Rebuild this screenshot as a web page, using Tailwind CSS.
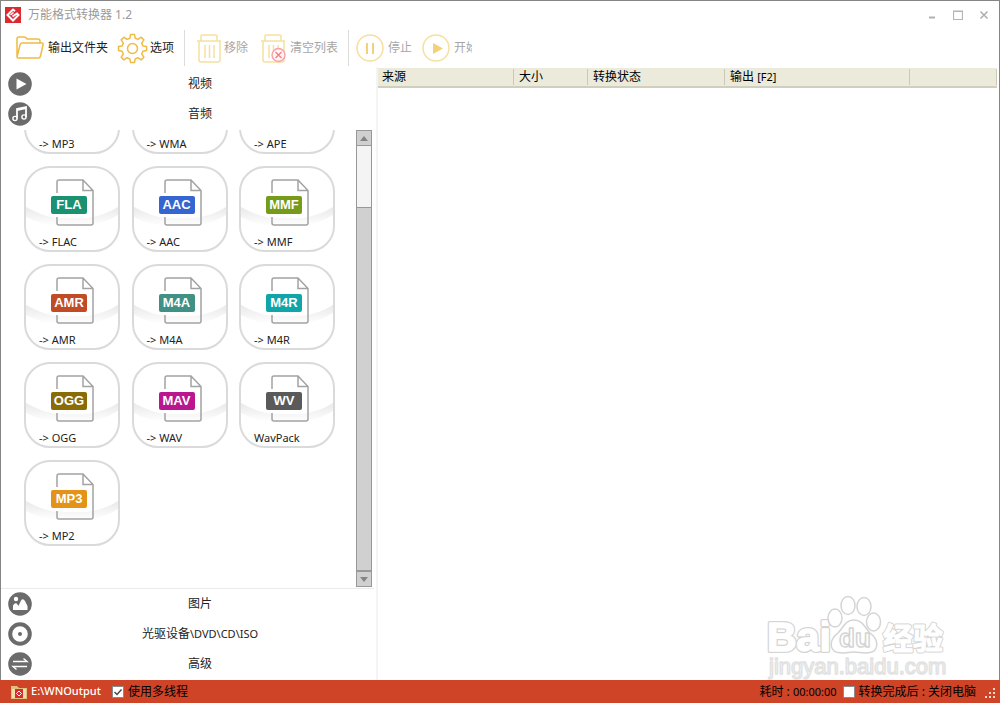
<!DOCTYPE html>
<html lang="zh-CN">
<head>
<meta charset="utf-8">
<title>万能格式转换器 1.2</title>
<script src="https://cdn.jsdelivr.net/npm/@tailwindcss/browser@4"></script>
</head>
<body class="flex h-screen flex-col overflow-hidden bg-white font-['Noto_Sans','Noto_Sans_CJK_SC',sans-serif] text-xs text-[#222]">
<svg class="absolute size-0">
  <symbol id="doc" viewBox="0 0 96 86">
    <path d="M2 41Q20 51 34 52H62Q80 50 94 41V49Q80 58 62 60H34Q14 58 2 51Z" fill="url(#shine)"/>
    <path d="M32 28V50H64V28Z" fill="#fff"/>
    <path d="M33 27V16q0-2 2-2H59L69 24.500V57q0 2-2 2H35q-2 0-2-2V51M59 14V24.500H69" fill="none" stroke="#a3a3a3" stroke-width="1.500"/>
  </symbol>
  <symbol id="trash" viewBox="0 0 26 29">
    <path d="M1 7H25M5 7V2q0-1 1-1H20q1 0 1 1V7M3 7V26q0 2 2 2H22q2 0 2-2V7M9 11V24M13.500 11V24M18 11V24" fill="none" stroke="#f6dfa0" stroke-width="1.500"/>
  </symbol>
  <linearGradient id="shine" x1="0" y1="0" x2="0" y2="1"><stop offset="0" stop-color="#e9e9e9"/><stop offset="1" stop-color="#fff"/></linearGradient>
</svg>

<div class="flex min-h-0 flex-1 flex-col border-x border-t border-[#858585]">
  <header class="flex h-7 shrink-0 items-center pl-1 pr-[10px] text-[#9a9a9a]">
    <svg class="mr-[7px] size-4" viewBox="0 0 16 16"><path d="M0 0H16V16H0Z" fill="#dc2a31"/><path d="M10 4.200 8 2.500 2.500 8 8 13.500 13.500 8 12 6.500 7.500 9.500" fill="none" stroke="#fff" stroke-width="2"/><path d="M5.500 8 8.500 5.500" stroke="#fff" stroke-width="1.500"/></svg>
    <h1 class="flex-1">万能格式转换器 1.2</h1>
    <div class="flex items-center gap-4">
      <button aria-label="最小化"><svg class="size-[10px]" viewBox="0 0 10 10"><path d="M2 7.500H8" stroke="#b0b0b0" stroke-width="2"/></svg></button>
      <button aria-label="最大化"><svg class="size-[10px]" viewBox="0 0 10 10"><path d="M.5 1H9.500V9.500H.5ZM0 1.500H10" fill="none" stroke="#b5b5b5" stroke-width="1.200"/></svg></button>
      <button aria-label="关闭"><svg class="size-[10px]" viewBox="0 0 10 10"><path d="M1.500 1.500 8.500 8.500M8.500 1.500 1.500 8.500" stroke="#b0b0b0" stroke-width="1.600"/></svg></button>
    </div>
  </header>

  <nav class="flex h-[38px] shrink-0 items-center pl-[15px]">
    <button class="mr-[9px] flex items-center gap-1">
      <svg class="h-6 w-7" viewBox="0 0 28 24"><path d="M1 21V3q0-2 2-2H8q2 0 3 2H22q2 0 2 2V7M1 21 4 9q.5-2 2-2H26q1.500 0 1 2L24.500 20q-.5 2-2 2H2q-1 0-1-1Z" fill="none" stroke="#eebc44" stroke-width="1.500"/></svg>
      <span>输出文件夹</span>
    </button>
    <button class="mr-[10px] flex items-center gap-[2px]">
      <svg class="size-[31px]" viewBox="0 0 31 31"><g fill="none" stroke="#eebc44" stroke-width="1.500"><path d="M13.500 1.500h4l.7 3.700 2.800 1.200 3.200-2.200 2.700 2.700-2.200 3.200 1.200 2.900 3.700.6v3.900l-3.700.7-1.200 2.800 2.200 3.200-2.700 2.700-3.200-2.200-2.800 1.200-.7 3.600h-4l-.6-3.600-2.900-1.200-3.100 2.200L4.200 24.200 6.300 21 5.100 18.200l-3.600-.7v-3.900l3.600-.6 1.200-2.900L4.200 6.900 6.900 4.200 10 6.400l2.900-1.200Z" stroke-linejoin="round"/><circle cx="15.500" cy="15.500" r="5"/></g></svg>
      <span>选项</span>
    </button>
    <span class="mr-[11px] h-9 w-px bg-[#ddd]"></span>
    <button class="mr-3 flex items-center gap-[2px] text-[#a6a6a6]">
      <svg class="h-[29px] w-[26px]"><use href="#trash"/></svg>
      <span>移除</span>
    </button>
    <button class="mr-[10px] flex items-center gap-1 text-[#a6a6a6]">
      <svg class="h-[29px] w-[26px]"><use href="#trash"/><circle cx="18.500" cy="21" r="6.500" fill="#fff3f3" stroke="#f7a0a5" stroke-width="1.400"/><path d="M15.500 18 21.500 24M21.500 18 15.500 24" stroke="#f27c84" stroke-width="1.200"/></svg>
      <span>清空列表</span>
    </button>
    <span class="mr-[7px] h-9 w-px bg-[#ddd]"></span>
    <button class="mr-[10px] flex items-center gap-1 text-[#a6a6a6]">
      <svg class="size-7" viewBox="0 0 28 28"><circle cx="14" cy="14" r="13" fill="none" stroke="#f6dfa0" stroke-width="1.500"/><path d="M11 9V20M17 9V20" stroke="#f3d07a" stroke-width="2"/></svg>
      <span>停止</span>
    </button>
    <button class="flex items-center gap-1 text-[#a6a6a6]">
      <svg class="size-7" viewBox="0 0 28 28"><circle cx="14" cy="14" r="13" fill="none" stroke="#f6dfa0" stroke-width="1.500"/><path d="M11 9 21 14.500 11 20Z" fill="#f3d07a"/></svg>
      <span class="w-[18px] overflow-hidden whitespace-nowrap">开始</span>
    </button>
  </nav>

  <main class="flex min-h-0 flex-1">
    <aside class="flex w-[377px] shrink-0 flex-col border-r-2 border-[#f4f4f4] pb-px pt-[2px]">
      <button class="flex h-[30px] shrink-0 items-center pl-[7px] pr-2">
        <svg class="size-6" viewBox="0 0 24 24"><circle cx="12" cy="12" r="11.800" fill="#6b6b6b"/><path d="M8.500 6.500 18.500 12 8.500 17.500Z" fill="#fff"/></svg>
        <span class="flex-1">视频</span>
      </button>
      <button class="flex h-[30px] shrink-0 items-center pl-[7px] pr-2">
        <svg class="size-6" viewBox="0 0 24 24"><circle cx="12" cy="12" r="11.800" fill="#6b6b6b"/><path d="M9 16.500V7L18 5V15M9 8.200 18 6.200" fill="none" stroke="#fff" stroke-width="1.800"/><circle cx="7" cy="16.500" r="2.100" fill="none" stroke="#fff" stroke-width="1.400"/><circle cx="16" cy="15" r="2.100" fill="none" stroke="#fff" stroke-width="1.400"/></svg>
        <span class="flex-1">音频</span>
      </button>
      <section class="mr-[2px] mt-px flex min-h-0 flex-1 overflow-hidden border-b border-[#ebebeb] pb-px pl-[23px]">
        <div class="-mt-[62px] grid w-[311px] grid-cols-[96px_96px_96px] content-start justify-between gap-y-3 text-[11px] leading-4">
          <button class="flex h-[86px] items-end rounded-[26px] border-2 border-[#dadada] px-[13px]">-&gt; MP3</button>
          <button class="flex h-[86px] items-end rounded-[26px] border-2 border-[#dadada] px-[13px]">-&gt; WMA</button>
          <button class="flex h-[86px] items-end rounded-[26px] border-2 border-[#dadada] px-[13px]">-&gt; APE</button>

          <button class="relative flex h-[86px] items-end rounded-[26px] border-2 border-[#dadada] px-[13px]"><svg class="absolute -inset-[2px] h-[86px] w-24"><use href="#doc"/></svg><b class="absolute left-[25px] top-7 h-[18px] w-9 rounded-[2px] bg-[#1a9271] text-center font-['Liberation_Sans',sans-serif] text-[13px] leading-[18px] text-white">FLA</b><span class="relative">-&gt; FLAC</span></button>
          <button class="relative flex h-[86px] items-end rounded-[26px] border-2 border-[#dadada] px-[13px]"><svg class="absolute -inset-[2px] h-[86px] w-24"><use href="#doc"/></svg><b class="absolute left-[25px] top-7 h-[18px] w-9 rounded-[2px] bg-[#3565d0] text-center font-['Liberation_Sans',sans-serif] text-[13px] leading-[18px] text-white">AAC</b><span class="relative">-&gt; AAC</span></button>
          <button class="relative flex h-[86px] items-end rounded-[26px] border-2 border-[#dadada] px-[13px]"><svg class="absolute -inset-[2px] h-[86px] w-24"><use href="#doc"/></svg><b class="absolute left-[25px] top-7 h-[18px] w-9 rounded-[2px] bg-[#759b19] text-center font-['Liberation_Sans',sans-serif] text-[13px] leading-[18px] text-white">MMF</b><span class="relative">-&gt; MMF</span></button>

          <button class="relative flex h-[86px] items-end rounded-[26px] border-2 border-[#dadada] px-[13px]"><svg class="absolute -inset-[2px] h-[86px] w-24"><use href="#doc"/></svg><b class="absolute left-[25px] top-7 h-[18px] w-9 rounded-[2px] bg-[#c04b24] text-center font-['Liberation_Sans',sans-serif] text-[13px] leading-[18px] text-white">AMR</b><span class="relative">-&gt; AMR</span></button>
          <button class="relative flex h-[86px] items-end rounded-[26px] border-2 border-[#dadada] px-[13px]"><svg class="absolute -inset-[2px] h-[86px] w-24"><use href="#doc"/></svg><b class="absolute left-[25px] top-7 h-[18px] w-9 rounded-[2px] bg-[#3f9186] text-center font-['Liberation_Sans',sans-serif] text-[13px] leading-[18px] text-white">M4A</b><span class="relative">-&gt; M4A</span></button>
          <button class="relative flex h-[86px] items-end rounded-[26px] border-2 border-[#dadada] px-[13px]"><svg class="absolute -inset-[2px] h-[86px] w-24"><use href="#doc"/></svg><b class="absolute left-[25px] top-7 h-[18px] w-9 rounded-[2px] bg-[#10a5a8] text-center font-['Liberation_Sans',sans-serif] text-[13px] leading-[18px] text-white">M4R</b><span class="relative">-&gt; M4R</span></button>

          <button class="relative flex h-[86px] items-end rounded-[26px] border-2 border-[#dadada] px-[13px]"><svg class="absolute -inset-[2px] h-[86px] w-24"><use href="#doc"/></svg><b class="absolute left-[25px] top-7 h-[18px] w-9 rounded-[2px] bg-[#8a6b06] text-center font-['Liberation_Sans',sans-serif] text-[13px] leading-[18px] text-white">OGG</b><span class="relative">-&gt; OGG</span></button>
          <button class="relative flex h-[86px] items-end rounded-[26px] border-2 border-[#dadada] px-[13px]"><svg class="absolute -inset-[2px] h-[86px] w-24"><use href="#doc"/></svg><b class="absolute left-[25px] top-7 h-[18px] w-9 rounded-[2px] bg-[#b9168f] text-center font-['Liberation_Sans',sans-serif] text-[13px] leading-[18px] text-white">MAV</b><span class="relative">-&gt; WAV</span></button>
          <button class="relative flex h-[86px] items-end rounded-[26px] border-2 border-[#dadada] px-[13px]"><svg class="absolute -inset-[2px] h-[86px] w-24"><use href="#doc"/></svg><b class="absolute left-[25px] top-7 h-[18px] w-9 rounded-[2px] bg-[#5a5a5a] text-center font-['Liberation_Sans',sans-serif] text-[13px] leading-[18px] text-white">WV</b><span class="relative">WavPack</span></button>

          <button class="relative flex h-[86px] items-end rounded-[26px] border-2 border-[#dadada] px-[13px]"><svg class="absolute -inset-[2px] h-[86px] w-24"><use href="#doc"/></svg><b class="absolute left-[25px] top-7 h-[18px] w-9 rounded-[2px] bg-[#e39317] text-center font-['Liberation_Sans',sans-serif] text-[13px] leading-[18px] text-white">MP3</b><span class="relative">-&gt; MP2</span></button>
        </div>
        <div class="ml-auto mr-[2px] flex w-4 flex-col border border-[#989898] bg-[#d0d0d0]">
          <button class="flex h-[15px] items-center justify-center border-b border-[#989898]" aria-label="向上滚动"><svg class="h-[5px] w-2" viewBox="0 0 8 5"><path d="M4 0 8 5H0Z" fill="#848484"/></svg></button>
          <div class="h-[62px] border-b border-[#989898] bg-[#f4f4f4]"></div>
          <button class="mt-auto flex h-4 items-center justify-center border-t-2 border-[#989898]" aria-label="向下滚动"><svg class="h-[5px] w-2" viewBox="0 0 8 5"><path d="M0 0H8L4 5Z" fill="#848484"/></svg></button>
        </div>
      </section>
      <button class="flex h-[30px] shrink-0 items-center pl-[7px] pr-2">
        <svg class="size-6" viewBox="0 0 24 24"><circle cx="12" cy="12" r="11.800" fill="#6b6b6b"/><circle cx="8" cy="7" r="2.200" fill="#fff"/><path d="M5 18V13.500Q7.500 9.500 9.500 12.500L10.500 14 13 8.500Q15 6 17 9L19.500 14V18Z" fill="#fff"/></svg>
        <span class="flex-1">图片</span>
      </button>
      <button class="flex h-[30px] shrink-0 items-center pl-[7px] pr-2">
        <svg class="size-6" viewBox="0 0 24 24"><circle cx="12" cy="12" r="9.800" fill="#fff" stroke="#6b6b6b" stroke-width="4"/><circle cx="12" cy="12" r="2" fill="#6b6b6b"/></svg>
        <span class="flex-1 text-[11px]"><span class="text-xs">光驱设备</span>\DVD\CD\ISO</span>
      </button>
      <button class="flex h-[30px] shrink-0 items-center pl-[7px] pr-2">
        <svg class="size-6" viewBox="0 0 24 24"><circle cx="12" cy="12" r="11.800" fill="#6b6b6b"/><path d="M5 9.500H19L15.500 6.500M19 14.500H5L8.500 17.500" fill="none" stroke="#fff" stroke-width="1.400"/></svg>
        <span class="flex-1">高级</span>
      </button>
    </aside>
    <div class="min-w-0 flex-1 pr-[2px] pt-px">
      <table class="w-full table-fixed border-separate border-spacing-0 text-left text-black">
        <thead>
          <tr class="bg-[#ebeadb] leading-4">
            <th class="h-5 w-[135px] border-b-2 border-[#d0cebf] p-0 pl-1 font-normal">来源</th>
            <th class="w-[74px] border-b-2 border-[#d0cebf] p-0 font-normal"><div class="border-l border-[#cbc8b6] pl-[5px]">大小</div></th>
            <th class="w-[137px] border-b-2 border-[#d0cebf] p-0 font-normal"><div class="border-l border-[#cbc8b6] pl-[5px]">转换状态</div></th>
            <th class="w-[185px] border-b-2 border-[#d0cebf] p-0 font-normal"><div class="border-l border-[#cbc8b6] pl-[5px]">输出 <span class="text-[11px]">[F2]</span></div></th>
            <th class="border-b-2 border-[#d0cebf] p-0"><div class="h-4 border-x border-[#cbc8b6]"></div></th>
          </tr>
        </thead>
      </table>
    </div>
  </main>
</div>

<footer class="flex h-[23px] shrink-0 items-center bg-[#cf4326] pl-[11px] pr-1 text-black">
  <a href="#" class="flex items-center gap-1 text-[11px] font-medium text-white"><svg class="h-[14px] w-4" viewBox="0 0 16 14"><path d="M0 1H6L8 3H16V14H0Z" fill="#ddc27a"/><path d="M1 4H15V13H1Z" fill="#f0dfaa"/><path d="M4 4H12V13H4Z" fill="#d92b31"/><path d="M8 6 10.500 8.500 8 11 5.500 8.500Z" fill="none" stroke="#fff"/></svg>E:\WNOutput</a>
  <label class="ml-[11px] flex items-center gap-1"><span class="relative flex"><input type="checkbox" checked class="peer size-3 appearance-none border border-[#8a8a8a] bg-white"><svg class="pointer-events-none absolute inset-0 hidden size-3 peer-checked:block" viewBox="0 0 12 12"><path d="M2.500 6 5 8.500 9.500 3.500" fill="none" stroke="#444" stroke-width="1.400"/></svg></span>使用多线程</label>
  <span class="ml-auto">耗时 : <span class="text-[11px]">00:00:00</span></span>
  <label class="ml-[6px] flex items-center gap-1"><input type="checkbox" class="size-3 appearance-none border border-[#8a8a8a] bg-white">转换完成后 : 关闭电脑</label>
  <svg class="ml-2 mt-1 size-3" viewBox="0 0 12 12"><path d="M9 0h2v2H9zM5 4h2v2H5zM9 4h2v2H9zM1 8h2v2H1zM5 8h2v2H5zM9 8h2v2H9z" fill="#f7d8cf"/></svg>
</footer>

<svg class="pointer-events-none absolute bottom-[18px] right-[50px] h-[90px] w-[184px]" viewBox="0 0 184 90" fill="#fff" stroke="#d4d4d4" stroke-width="1.500" stroke-linejoin="round" font-family="'Liberation Sans','Noto Sans CJK SC',sans-serif">
  <g font-weight="700">
    <text x="1" y="56" font-size="41" stroke-width="4">Bai</text>
    <text x="1" y="56" font-size="41" stroke="#fff" stroke-width="1.500">Bai</text>
    <text x="117" y="54" font-size="30" stroke-width="3">经验</text>
    <text x="117" y="54" font-size="30" stroke="#fff" stroke-width="1">经验</text>
  </g>
  <ellipse cx="69" cy="23" rx="7" ry="9"/><ellipse cx="82" cy="10.500" rx="7" ry="9"/><ellipse cx="98" cy="11.500" rx="7" ry="9"/><ellipse cx="107.500" cy="27" rx="7" ry="9"/>
  <path d="M88 25C79 25 77 33 72 38C65 43 63 51 68 56C74 60 82 57 88 57S102 60 108 56C113 51 111 43 104 38C99 33 97 25 88 25Z"/>
  <text x="73" y="52" font-size="26" font-weight="700">du</text>
  <text x="3" y="79" font-size="22" stroke="#e2e2e2" stroke-width="1.500">jingyan.baidu.com</text>
</svg>
</body>
</html>
